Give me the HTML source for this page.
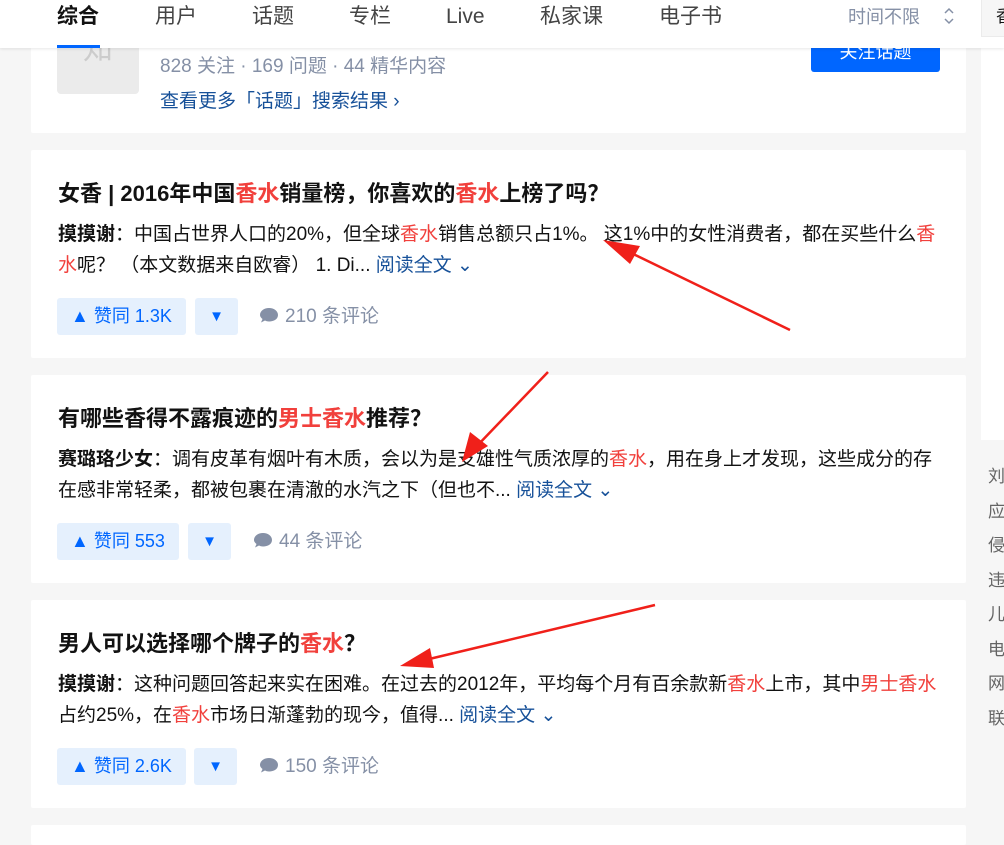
<!DOCTYPE html>
<html><head><meta charset="utf-8"><style>
*{margin:0;padding:0;box-sizing:border-box}
body{width:1004px;height:833px;overflow:hidden;background:#f6f6f6;font-family:"Liberation Sans","Noto Sans CJK SC",sans-serif;position:relative;color:#121212}
.hdr{position:absolute;left:0;top:0;width:1004px;height:48px;background:#fff;box-shadow:0 1px 3px rgba(18,18,18,.1);z-index:5}
.tab{position:absolute;top:3px;font-size:21px;color:#444;line-height:28px}
.card{position:absolute;left:31px;width:935px;background:#fff;border-radius:2px}
.t{position:absolute;left:27px;font-size:22px;font-weight:bold;line-height:28px;white-space:nowrap}
.b{position:absolute;left:27px;width:880px;font-size:19px;line-height:31px;color:#121212}
.r{color:#f1403c}
.more{color:#175199}
.up{position:absolute;left:26px;height:37px;background:#e5f0fd;color:#0066ff;border-radius:3px;font-size:18px;line-height:37px;padding:0 14px}
.dn{position:absolute;width:43px;height:37px;background:#e5f0fd;color:#0066ff;border-radius:3px;font-size:15px;line-height:37px;text-align:center}
.cm{position:absolute;font-size:19px;color:#8590a6;line-height:37px}
.cm svg{vertical-align:-2px;margin-right:6px}
.side{position:absolute;left:988px;font-size:17px;color:#646464}
</style></head><body>
<div class="hdr">
<span class="tab" style="left:57px;font-weight:bold;color:#121212">综合</span>
<span class="tab" style="left:155px">用户</span>
<span class="tab" style="left:252px">话题</span>
<span class="tab" style="left:349px">专栏</span>
<span class="tab" style="left:446px">Live</span>
<span class="tab" style="left:540px">私家课</span>
<span class="tab" style="left:659px">电子书</span>
<div style="position:absolute;left:57px;top:45px;width:43px;height:3px;background:#0066ff"></div>
<span class="tab" style="left:848px;font-size:18px;color:#8590a6">时间不限</span>
<svg style="position:absolute;left:943px;top:6px" width="12" height="20"><path d="M2 7 L6 3 L10 7 M2 13 L6 17 L10 13" fill="none" stroke="#8590a6" stroke-width="1.5"/></svg>
<div style="position:absolute;left:981px;top:0;width:30px;height:37px;border:1px solid #ebebeb;border-top:none;background:#f6f6f6;font-size:17px;line-height:34px;padding-left:14px">香</div>
</div>
<div class="card" style="top:0;height:133px">
<div style="position:absolute;left:26px;top:40px;width:82px;height:54px;background:#ebebeb;border-radius:4px;color:#ccc;font-size:30px;text-align:center;line-height:20px">知</div>
<div style="position:absolute;left:129px;top:51px;font-size:19px;color:#8590a6">828 关注 · 169 问题 · 44 精华内容</div>
<div style="position:absolute;left:129px;top:86px;font-size:19px;color:#175199">查看更多「话题」搜索结果 ›</div>
<div style="position:absolute;left:780px;top:30px;width:129px;height:42px;background:#0066ff;border-radius:3px;color:#fff;font-size:18px;text-align:center;line-height:44px">关注话题</div>
</div>
<div class="card" style="top:150px;height:208px">
<div class="t" style="top:30px">女香 | 2016年中国<span class="r">香水</span>销量榜，你喜欢的<span class="r">香水</span>上榜了吗？</div>
<div class="b" style="top:69px"><b>摸摸谢</b>：中国占世界人口的20%，但全球<span class="r">香水</span>销售总额只占1%。 这1%中的女性消费者，都在买些什么<span class="r">香水</span>呢？ （本文数据来自欧睿） 1. Di... <span class="more">阅读全文 ⌄</span></div>
<div class="up" style="top:148px">▲ 赞同 1.3K</div>
<div class="dn" style="left:164px;top:148px">▼</div>
<div class="cm" style="left:228px;top:148px"><svg width="20" height="18"><path d="M10 2 C15 2 19 5 19 9 C19 13 15 15.5 10 15.5 C8.5 15.5 7 15 6 14.5 L2 16.5 L3.5 13 C2 11.8 1 10.5 1 9 C1 5 5 2 10 2Z" fill="#8590a6"/></svg>210 条评论</div>
</div>
<div class="card" style="top:375px;height:208px">
<div class="t" style="top:30px">有哪些香得不露痕迹的<span class="r">男士香水</span>推荐？</div>
<div class="b" style="top:69px"><b>赛璐珞少女</b>：调有皮革有烟叶有木质，会以为是支雄性气质浓厚的<span class="r">香水</span>，用在身上才发现，这些成分的存在感非常轻柔，都被包裹在清澈的水汽之下（但也不... <span class="more">阅读全文 ⌄</span></div>
<div class="up" style="top:148px">▲ 赞同 553</div>
<div class="dn" style="left:157px;top:148px">▼</div>
<div class="cm" style="left:222px;top:148px"><svg width="20" height="18"><path d="M10 2 C15 2 19 5 19 9 C19 13 15 15.5 10 15.5 C8.5 15.5 7 15 6 14.5 L2 16.5 L3.5 13 C2 11.8 1 10.5 1 9 C1 5 5 2 10 2Z" fill="#8590a6"/></svg>44 条评论</div>
</div>
<div class="card" style="top:600px;height:208px">
<div class="t" style="top:30px">男人可以选择哪个牌子的<span class="r">香水</span>？</div>
<div class="b" style="top:69px"><b>摸摸谢</b>：这种问题回答起来实在困难。在过去的2012年，平均每个月有百余款新<span class="r">香水</span>上市，其中<span class="r">男士香水</span>占约25%，在<span class="r">香水</span>市场日渐蓬勃的现今，值得... <span class="more">阅读全文 ⌄</span></div>
<div class="up" style="top:148px">▲ 赞同 2.6K</div>
<div class="dn" style="left:163px;top:148px">▼</div>
<div class="cm" style="left:228px;top:148px"><svg width="20" height="18"><path d="M10 2 C15 2 19 5 19 9 C19 13 15 15.5 10 15.5 C8.5 15.5 7 15 6 14.5 L2 16.5 L3.5 13 C2 11.8 1 10.5 1 9 C1 5 5 2 10 2Z" fill="#8590a6"/></svg>150 条评论</div>
</div>
<div class="card" style="top:825px;height:20px"></div>
<div style="position:absolute;left:981px;top:37px;width:30px;height:403px;background:#fff"></div>
<div class="side" style="top:460px;line-height:34.5px">刘<br>应<br>侵<br>违<br>儿<br>电<br>网<br>联</div>
<svg style="position:absolute;left:0;top:0" width="1004" height="833">
<g fill="#f0201a" stroke="#f0201a">
<line x1="790" y1="330" x2="625" y2="250" stroke-width="2.5"/>
<polygon points="603,240 640,246 630,264" stroke="none"/>
<line x1="548" y1="372" x2="475" y2="448" stroke-width="2.5"/>
<polygon points="462,462 470,432 488,446" stroke="none"/>
<line x1="655" y1="605" x2="425" y2="660" stroke-width="2.5"/>
<polygon points="400,666 430,648 434,668" stroke="none"/>
</g></svg>
</body></html>
